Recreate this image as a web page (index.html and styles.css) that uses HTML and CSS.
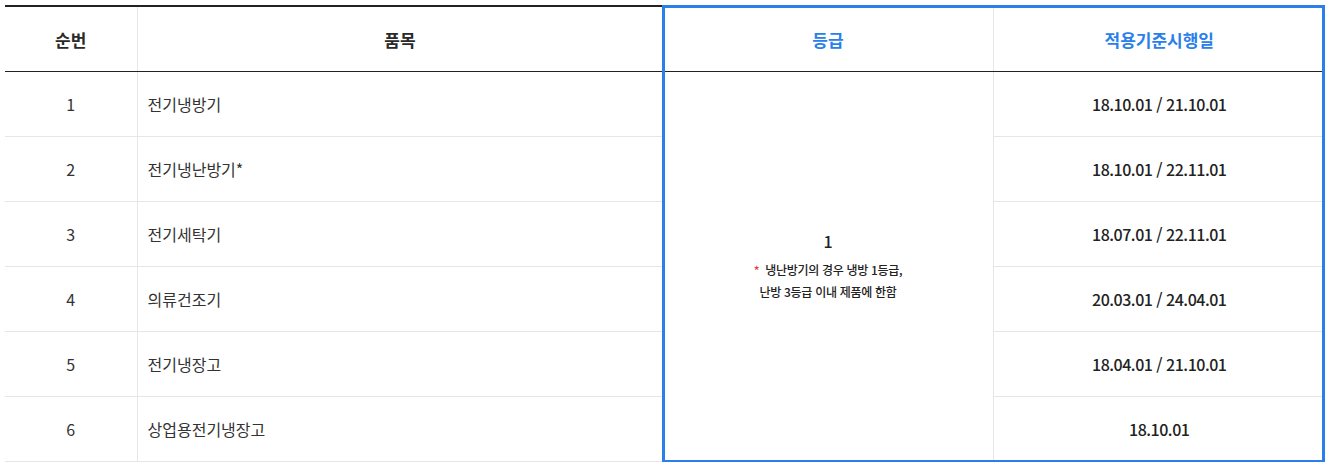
FILE: index.html
```html
<!DOCTYPE html>
<html lang="ko">
<head>
<meta charset="utf-8">
<link rel="stylesheet" href="styles.css">
</head>
<body>
<div class="wrap">
  <table class="tbl">
    <colgroup>
      <col class="c1"><col class="c2"><col class="c3"><col class="c4">
    </colgroup>
    <thead>
      <tr>
        <th>순번</th>
        <th>품목</th>
        <th class="blue">등급</th>
        <th class="blue">적용기준시행일</th>
      </tr>
    </thead>
    <tbody>
      <tr>
        <td class="num">1</td>
        <td class="item">전기냉방기</td>
        <td class="grade" rowspan="6">
          <div class="g1">1</div>
          <div class="note"><span class="ast">*</span> 냉난방기의 경우 냉방 1등급,<br>난방 3등급 이내 제품에 한함</div>
        </td>
        <td class="date">18.10.01 / 21.10.01</td>
      </tr>
      <tr>
        <td class="num">2</td>
        <td class="item">전기냉난방기*</td>
        <td class="date">18.10.01 / 22.11.01</td>
      </tr>
      <tr>
        <td class="num">3</td>
        <td class="item">전기세탁기</td>
        <td class="date">18.07.01 / 22.11.01</td>
      </tr>
      <tr>
        <td class="num">4</td>
        <td class="item">의류건조기</td>
        <td class="date">20.03.01 / 24.04.01</td>
      </tr>
      <tr>
        <td class="num">5</td>
        <td class="item">전기냉장고</td>
        <td class="date">18.04.01 / 21.10.01</td>
      </tr>
      <tr>
        <td class="num">6</td>
        <td class="item">상업용전기냉장고</td>
        <td class="date">18.10.01</td>
      </tr>
    </tbody>
  </table>
  <div class="hl"></div>
</div>
</body>
</html>
```
FILE: styles.css
```css
html, body {
  margin: 0;
  padding: 0;
  background: #fff;
}
body {
  font-family: "Noto Sans CJK KR", "Noto Sans", sans-serif;
  color: #222;
}
.wrap {
  position: relative;
  margin: 5px 0 0 5px;
  width: 1320px;
}
.tbl {
  border-collapse: collapse;
  table-layout: fixed;
  width: 1320px;
  border-top: 2px solid #222;
}
.c1 { width: 132px; }
.c2 { width: 526px; }
.c3 { width: 330px; }
.c4 { width: 332px; }
.tbl th {
  height: 64px;
  padding: 0;
  font-size: 17px;
  font-weight: 700;
  color: #2a2a2a;
  border-bottom: 1px solid #222;
  border-left: 1px solid #e6e6e6;
  text-align: center;
  vertical-align: middle;
}
.tbl th:first-child { border-left: 0; }
.tbl th.blue { color: #2a80ea; }
.tbl td {
  height: 64px;
  padding: 0;
  border-bottom: 1px solid #e6e6e6;
  border-left: 1px solid #e6e6e6;
  vertical-align: middle;
  font-size: 16px;
  color: #222;
}
.tbl td.num {
  border-left: 0;
  text-align: center;
  font-size: 16px;
  color: #333;
}
.tbl td.item {
  padding-left: 10px;
  font-size: 16px;
  color: #333;
}
.tbl td.date {
  text-align: center;
  font-size: 16px;
  font-weight: 500;
  letter-spacing: -0.5px;
  color: #222;
}
.tbl td.grade {
  text-align: center;
}
.g1 {
  font-size: 16px;
  font-weight: 500;
  line-height: 22px;
  margin-bottom: 7px;
}
.note {
  font-size: 12px;
  font-weight: 500;
  line-height: 22px;
  color: #222;
  letter-spacing: -0.3px;
}
.ast {
  color: #e8413a;
  margin-right: 3px;
}
.hl {
  position: absolute;
  left: 657px;
  top: 0;
  width: 657px;
  height: 452px;
  border: 3px solid #2a80ea;
  pointer-events: none;
}
```
